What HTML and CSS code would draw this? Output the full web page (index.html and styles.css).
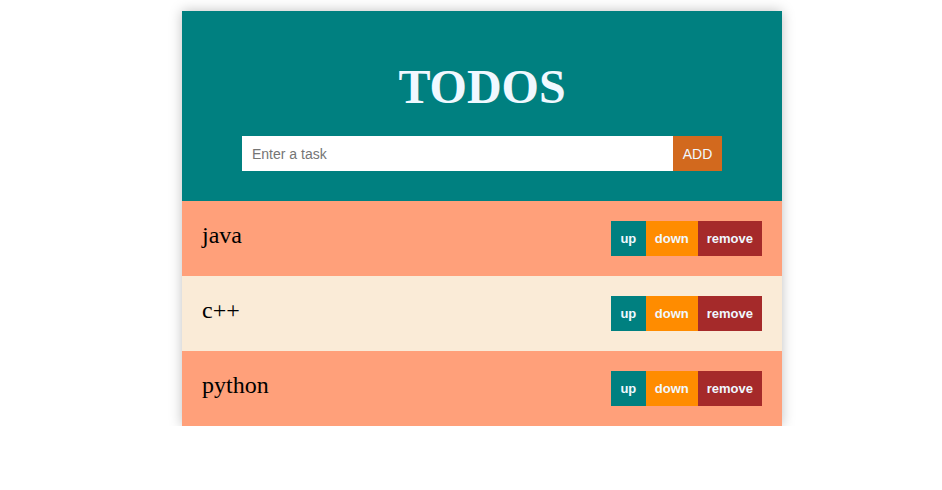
FILE: index.html
```html
<!DOCTYPE html>
<html>
<head>
<meta charset="utf-8">
<link rel="stylesheet" href="styles.css">
</head>
<body>
<div class="app">
  <header class="head">
    <h1 class="title">TODOS</h1>
    <form class="add-form">
      <input class="task-input" type="text" placeholder="Enter a task">
      <button class="add-btn" type="button">ADD</button>
    </form>
  </header>
  <ul class="list">
    <li class="item odd">
      <span class="name">java</span>
      <div class="actions"><button class="btn up">up</button><button class="btn down">down</button><button class="btn remove">remove</button></div>
    </li>
    <li class="item even">
      <span class="name">c++</span>
      <div class="actions"><button class="btn up">up</button><button class="btn down">down</button><button class="btn remove">remove</button></div>
    </li>
    <li class="item odd">
      <span class="name">python</span>
      <div class="actions"><button class="btn up">up</button><button class="btn down">down</button><button class="btn remove">remove</button></div>
    </li>
  </ul>
</div>
</body>
</html>
```
FILE: styles.css
```css
html, body {
  margin: 0;
  padding: 0;
  background: #fff;
}
body {
  padding: 11px 0 0 22px;
  font-family: "Liberation Serif", "Times New Roman", serif;
}
.app {
  width: 600px;
  margin: 0 auto;
  box-shadow: 0 0 12px rgba(0, 0, 0, 0.25);
}
.head {
  background: #008080;
  padding: 48px 0 30px;
  display: flex;
  flex-direction: column;
  align-items: center;
}
.title {
  margin: 0 0 21px;
  font-size: 48px;
  line-height: 56px;
  font-weight: bold;
  color: #f0f8ff;
}
.add-form {
  display: flex;
  margin: 0;
}
.task-input {
  width: 431px;
  height: 35px;
  box-sizing: border-box;
  border: none;
  outline: none;
  padding: 0 10px;
  font-family: "Liberation Sans", Arial, sans-serif;
  font-size: 14px;
  color: #333;
  background: #fff;
}
.task-input::placeholder {
  color: #757575;
}
.add-btn {
  width: 49px;
  height: 35px;
  border: none;
  background: #d2691e;
  color: #f0f8ff;
  font-family: "Liberation Sans", Arial, sans-serif;
  font-size: 14px;
  padding: 0;
}
.list {
  list-style: none;
  margin: 0;
  padding: 0;
}
.item {
  height: 75px;
  box-sizing: border-box;
  padding: 20px;
  display: flex;
  justify-content: space-between;
  align-items: flex-start;
}
.odd { background: #ffa07a; }
.even { background: #faebd7; }
.name {
  font-size: 24px;
  line-height: 28px;
  color: #000;
}
.actions {
  display: flex;
}
.btn {
  height: 35px;
  border: none;
  padding: 0 9px;
  font-family: "Liberation Sans", Arial, sans-serif;
  font-size: 13px;
  font-weight: bold;
  color: #f0f8ff;
}
.btn.up { padding: 0 9.5px; }
.up { background: #008080; }
.down { background: #ff8c00; }
.remove { background: #a52a2a; }
```
